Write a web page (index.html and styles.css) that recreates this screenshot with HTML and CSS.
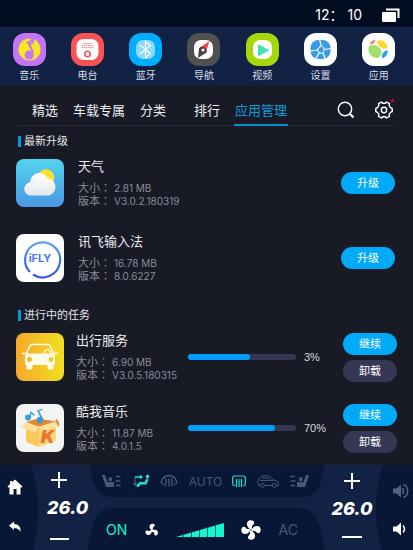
FILE: index.html
```html
<!DOCTYPE html>
<html lang="zh-CN">
	<head>
		<meta charset="utf-8"/>
		<meta name="viewport" content="width=device-width, initial-scale=1"/>
		<title>应用管理</title>
		<link rel="stylesheet" href="styles.css">
	</head>
	<body>
		<header class="status">
			<time class="clock">12： 10</time>
			<button class="icon-btn" type="button" aria-label="最近任务">
				<svg width="18" height="14" viewBox="0 0 18 14">
					<path d="M4 1.500h12.500v8.500" fill="none" stroke="#fff" stroke-width="2"/>
					<rect x="0" y="4" width="14" height="10" rx="1" fill="#fff"/>
				</svg>
			</button>
		</header>

		<nav class="launcher">
			<a href="#music">
				<svg width="33" height="33" viewBox="0 0 33 33">
					<rect width="33" height="33" rx="12" fill="#c573fb"/>
					<circle cx="16.500" cy="16.500" r="11" fill="#f8e71c"/>
					<path d="M13.500 9.500c3 .2 5-1.500 6.500-4.500-.3 2-.2 3 .3 4-1 1.500-2.600 2-4.300 2l4.200 8.500" fill="none" stroke="#c573fb" stroke-width="2"/>
					<circle cx="16.200" cy="22" r="4.600" fill="#c573fb"/>
				</svg>
				音乐
			</a>
			<a href="#radio">
				<svg width="33" height="33" viewBox="0 0 33 33">
					<rect width="33" height="33" rx="12" fill="#fb5353"/>
					<rect x="5.500" y="6" width="22" height="21" rx="7" fill="#fff"/>
					<g stroke="#fb8a8a" stroke-width="1" stroke-dasharray="1.500 .6">
						<path d="M12 10.500h9M10.500 12.500h12M10.500 14.500h12"/>
					</g>
					<circle cx="16.500" cy="21" r="2.700" fill="#fff" stroke="#fb5353" stroke-width="1.600"/>
				</svg>
				电台
			</a>
			<a href="#bluetooth">
				<svg width="33" height="33" viewBox="0 0 33 33">
					<rect width="33" height="33" rx="12" fill="#00aeff"/>
					<rect x="7" y="7" width="19" height="19" rx="7" fill="#8adaf8"/>
					<path d="M11 12l10.500 8.500-5 4V8.500l5 4L11 21" fill="none" stroke="#fff" stroke-width="1.200"/>
				</svg>
				蓝牙
			</a>
			<a href="#navigation">
				<svg width="33" height="33" viewBox="0 0 33 33">
					<rect width="33" height="33" rx="12" fill="#505050"/>
					<rect x="7" y="7" width="19" height="19" rx="7" fill="#fff"/>
					<path d="M22.500 8l-9.500 6.500 6 4z" fill="#f8444a"/>
					<path d="M11 25l1-9.500c2.500-4 9.500 0 7.500 4z" fill="#454545"/>
					<circle cx="16" cy="17" r="1.500" fill="#fff"/>
				</svg>
				导航
			</a>
			<a href="#video">
				<svg width="33" height="33" viewBox="0 0 33 33">
					<rect width="33" height="33" rx="12" fill="#a5d70a"/>
					<rect x="7" y="7" width="19" height="19" rx="7" fill="#fff"/>
					<path d="M12.500 12v10.500L22.500 17.300z" fill="#43dfb6" stroke="#43dfb6" stroke-linejoin="round"/>
				</svg>
				视频
			</a>
			<a href="#settings">
				<svg width="33" height="33" viewBox="0 0 33 33">
					<rect width="33" height="33" rx="12" fill="#fff"/>
					<rect x="6.500" y="7" width="20" height="19" rx="8" fill="#3a9ae2"/>
					<path d="M15.500 6l1.500 6.500M14 17L6 18M20.500 16.500l6.500-1M19 20l2.500 6.500M15 20l-3.500 6" fill="none" stroke="#fff" stroke-width="1.200"/>
					<path d="M17 12.500l3.500 3.500-1.500 4h-4l-1.500-3.500z" fill="#3a9ae2" stroke="#fff" stroke-width="1.300" stroke-dasharray="2 .8"/>
				</svg>
				设置
			</a>
			<a href="#apps">
				<svg width="33" height="33" viewBox="0 0 33 33">
					<rect width="33" height="33" rx="12" fill="#fff"/>
					<path d="M7 13c4-2.500 11 0 12 4 1 3.500-.5 7-3 8-5 .5-9-3.500-9.500-7.500-.2-2 0-3.500.5-4.500z" fill="#a5e06a"/>
					<path d="M15 8c4-2 10 .5 10.500 7-3 2-9 .5-10.500-7z" fill="#fbd92c"/>
					<path d="M13.500 7c-3 0-5 1.500-6 4.500 3 0 5.500-1.500 6-4.500z" fill="#f47c7c"/>
					<path d="M25.500 17c-4 1-6 4-5.500 8 3.500 0 6-4 5.500-8z" fill="#1ba5ee"/>
				</svg>
				应用
			</a>
		</nav>

		<main class="store">
			<div class="toolbar">
				<nav class="tabs">
					<a href="#selected">精选</a>
					<a href="#car">车载专属</a>
					<a href="#category">分类</a>
					<a class="apart" href="#rank">排行</a>
					<a class="active" href="#manage">应用管理</a>
				</nav>
				<button class="icon-btn" type="button" aria-label="搜索">
					<svg width="18" height="18" viewBox="0 0 18 18" fill="none" stroke="#fff">
						<circle cx="8" cy="8" r="6.700" stroke-width="1.400"/>
						<path d="M12.800 12.800l3.700 3.700" stroke-width="2.200"/>
					</svg>
				</button>
				<button class="icon-btn notify" type="button" aria-label="设置">
					<svg width="18" height="18" viewBox="0 0 18 18" fill="none" stroke="#fff" stroke-width="1.400" stroke-linejoin="round">
						<path d="M6.500 1l1 1.200h3l1-1.200 3 1.700-.4 1.800 1.200 2 1.900.8v3.400l-1.900.8-1.200 2 .4 1.800-3 1.700-1-1.200h-3l-1 1.200-3-1.700.4-1.800-1.200-2-1.900-.8V7.300l1.900-.8 1.200-2-.4-1.800z"/>
						<circle cx="9" cy="9" r="2.700"/>
					</svg>
				</button>
			</div>

			<section class="group">
				<h2>最新升级</h2>
				<article class="app">
					<svg class="logo" viewBox="0 0 48 48">
						<defs>
							<linearGradient id="sky" x2="0" y2="1">
								<stop stop-color="#52d3ee"/>
								<stop offset="1" stop-color="#4a98e4"/>
							</linearGradient>
							<linearGradient id="cloud" x2="0" y2="1">
								<stop stop-color="#fff"/>
								<stop offset="1" stop-color="#e4e8ea"/>
							</linearGradient>
						</defs>
						<rect width="48" height="48" rx="8" fill="url(#sky)"/>
						<circle cx="30" cy="18.500" r="8.300" fill="#ffe12b"/>
						<path d="M15.500 36.500a6.600 6.600 0 0 1-1.300-13.200c.3-5.300 4.300-9.300 9-9.300 4 0 7 2.200 8.300 5.600 4.500.2 8 3.800 8 8.300 0 4.600-3.600 8.600-8.300 8.600z" fill="url(#cloud)"/>
					</svg>
					<div class="info">
						<h3>天气</h3>
						<dl lang="zh-TW">
							<dt>大小：</dt><dd>2.81 MB</dd>
							<dt>版本：</dt><dd>V3.0.2.180319</dd>
						</dl>
					</div>
					<button class="btn" type="button">升级</button>
				</article>
				<article class="app">
					<svg class="logo" viewBox="0 0 48 48">
						<defs>
							<linearGradient id="ring" x2="0" y2="1">
								<stop stop-color="#58a0f6"/>
								<stop offset="1" stop-color="#3457e6"/>
							</linearGradient>
						</defs>
						<rect width="48" height="48" rx="8" fill="#fff"/>
						<path d="M14 38A17.500 17.500 0 1 1 17 40.500" fill="none" stroke="url(#ring)" stroke-width="2.200"/>
						<text class="ifly" x="24" y="28" text-anchor="middle">iFLY</text>
					</svg>
					<div class="info">
						<h3>讯飞输入法</h3>
						<dl lang="zh-TW">
							<dt>大小：</dt><dd>16.78 MB</dd>
							<dt>版本：</dt><dd>8.0.6227</dd>
						</dl>
					</div>
					<button class="btn" type="button">升级</button>
				</article>
			</section>

			<section class="group tasks">
				<h2>进行中的任务</h2>
				<article class="app">
					<svg class="logo" viewBox="0 0 48 48">
						<defs>
							<linearGradient id="taxi">
								<stop stop-color="#f5a828"/>
								<stop offset="1" stop-color="#f2df22"/>
							</linearGradient>
						</defs>
						<rect width="48" height="48" rx="8" fill="url(#taxi)"/>
						<path d="M10 21.500l4-9c.4-.8 1-1 2-1h16c1 0 1.600.2 2 1l4 9M6 20.500h5M37 20.500h5" fill="none" stroke="#fffbe8" stroke-width="1.500"/>
						<path d="M10.500 20.500h27l1.500 2v9.500h-1.500v3a1.500 1.500 0 0 1-1.500 1.500h-3a1.500 1.500 0 0 1-1.500-1.500v-3h-15v3a1.500 1.500 0 0 1-1.500 1.500h-3a1.500 1.500 0 0 1-1.500-1.500v-3H9v-9.500z" fill="#fffbe8"/>
						<circle cx="31.500" cy="19.500" r="3" fill="none" stroke="#fffbe8" stroke-width="1.200"/>
						<circle cx="13.500" cy="26.500" r="2.400" fill="#f3b524"/>
						<circle cx="35" cy="26.500" r="2.400" fill="#f2c722"/>
					</svg>
					<div class="info">
						<h3>出行服务</h3>
						<dl lang="zh-TW">
							<dt>大小：</dt><dd>6.90 MB</dd>
							<dt>版本：</dt><dd>V3.0.5.180315</dd>
						</dl>
					</div>
					<div class="bar"><div class="fill" style="width: 57%"></div></div>
					<span class="percent">3%</span>
					<div class="actions">
						<button class="btn" type="button">继续</button>
						<button class="btn muted" type="button">卸载</button>
					</div>
				</article>
				<article class="app">
					<svg class="logo" viewBox="0 0 48 48">
						<rect width="48" height="48" rx="8" fill="#f4f4f4"/>
						<path d="M10 18l12-3.500 18 3-18 5.500z" fill="#e58a2c"/>
						<path d="M40 14.500l3 3.500v5l-4-3.500z" fill="#ee8a30"/>
						<path d="M10 18l13 5v20L10 38z" fill="#fbc65a"/>
						<path d="M23 23l17-4.500v18L23 43z" fill="#fcd778"/>
						<path d="M10 18l13 5-4 5.500-14-5z" fill="#fde09a"/>
						<path d="M23 23l17-4.500 2 3.500-16 5z" fill="#fde3a0"/>
						<g fill="#359ddf">
							<circle cx="12" cy="13.500" r="3"/>
							<circle cx="24" cy="16" r="3.200"/>
							<path d="M13.500 13l1-6 4.500 4-1 .8-2.800-2L15 14zM25.500 15.500l-4.500-9 5.500-2-.4 1.600-3.100 1 4 7.500z"/>
						</g>
						<text class="kuwo" x="31.500" y="39" text-anchor="middle">K</text>
					</svg>
					<div class="info">
						<h3>酷我音乐</h3>
						<dl lang="zh-TW">
							<dt>大小：</dt><dd>11.87 MB</dd>
							<dt>版本：</dt><dd>4.0.1.5</dd>
						</dl>
					</div>
					<div class="bar"><div class="fill" style="width: 81%"></div></div>
					<span class="percent">70%</span>
					<div class="actions">
						<button class="btn" type="button">继续</button>
						<button class="btn muted" type="button">卸载</button>
					</div>
				</article>
			</section>
		</main>

		<footer class="climate">
			<!-- dark panels behind the controls -->
			<svg class="panels" viewBox="0 0 413 86" preserveAspectRatio="none" fill="#071735">
				<path d="M0 0h31q13 42 2 86H0z"/>
				<path d="M413 0h-30q-14 42-1 86h31z"/>
				<path d="M89 0C93 16 94 32 112 32h190c16 0 20-12 22-32z"/>
				<path d="M87 86C92 66 92 43 112 43h188c18 0 20 20 25 43z"/>
			</svg>

			<div class="side">
				<button class="icon-btn" type="button" aria-label="主页">
					<svg width="16" height="16" viewBox="0 0 16 16" fill="#fff">
						<path d="M8 .5l7.500 7-1 1.200L13.500 8v7.500h-4V10h-3v5.500h-4V8l-1 .7-1-1.200L3 5V2h2v1.200z"/>
					</svg>
				</button>
				<button class="icon-btn" type="button" aria-label="返回">
					<svg width="16" height="16" viewBox="0 0 16 16" fill="#fff">
						<path d="M2 6.500L7 2.500V5c4.500 0 7 3 6.500 8C12 10 10 9 7 9v2z"/>
					</svg>
				</button>
			</div>

			<div class="temp">
				<button class="icon-btn" type="button" aria-label="升温">
					<svg width="22" height="22" viewBox="0 0 22 22" stroke="#fff" stroke-width="2"><path d="M4 11h16M12 3v16"/></svg>
				</button>
				<output>26.0</output>
				<button class="icon-btn" type="button" aria-label="降温">
					<svg width="22" height="22" viewBox="0 0 22 22" stroke="#fff" stroke-width="2"><path d="M3 14h20"/></svg>
				</button>
			</div>

			<div class="controls">
				<div class="modes">
					<button class="icon-btn" type="button" aria-label="左座椅">
						<svg width="20" height="16" viewBox="0 0 20 16">
							<path d="M0 2h3l2.500 7H12v5H4z" fill="#4a5875"/>
							<path d="M6.500 4.500h3.500v3.500H6.500z" fill="#4a5875"/>
							<path d="M14 3.500h4.500M13.500 8h5M14 12.500h4.500" stroke="#4a5875" stroke-width="1.600"/>
						</svg>
					</button>
					<button class="icon-btn" type="button" aria-label="吹风方向">
						<svg width="18" height="16" viewBox="0 0 18 16" fill="none" stroke="#27e0bd">
							<path d="M3 4h7" stroke-width="1.500"/>
							<path d="M8 1.500L11 4 8 6.500z" fill="#27e0bd" stroke="none"/>
							<path d="M3 4v8M1.500 10L3 12.500 4.500 10" stroke="#3c7f8d"/>
							<circle cx="15.500" cy="3.500" r="1.800" fill="#27e0bd" stroke="none"/>
							<path d="M15.500 6l-2 4.500-5-.5L5 13.500" stroke-width="2.500"/>
						</svg>
					</button>
					<button class="icon-btn" type="button" aria-label="前除雾">
						<svg width="18" height="16" viewBox="0 0 18 16" fill="none" stroke="#4a5875" stroke-width="1.300">
							<path d="M3.500 11.500L1 9.500C2.500 4.500 5 2.500 9 2.500s6.500 2 8 7l-2.500 2"/>
							<path d="M6 5.500c-1.500 2 1 3 0 4.500s-.5 2-1 3M9 5.500c-1.500 2 1 3 0 4.500v3.500M12 5.500c-1.500 2 1 3 0 4.500s.5 2 1 3"/>
						</svg>
					</button>
					<button class="auto" type="button">AUTO</button>
					<button class="icon-btn" type="button" aria-label="后除雾">
						<svg width="14" height="16" viewBox="0 0 14 16" fill="none" stroke="#27e0bd" stroke-width="1.200">
							<path d="M3 12.500H2.200Q.7 12.500.7 11V5Q.7 3 2.500 3h9q1.800 0 1.800 2v6q0 1.500-1.500 1.500H11"/>
							<path d="M4.500 6c-1 1.500.8 2.500 0 4v4M7 6c-1 1.500.8 2.500 0 4v4M9.500 6c-1 1.500.8 2.500 0 4v4"/>
						</svg>
					</button>
					<button class="icon-btn" type="button" aria-label="循环">
						<svg width="22" height="16" viewBox="0 0 22 16" fill="none" stroke="#4a5875">
							<path d="M3.500 12.500H1.500L.8 8 4 3.500Q9 1.500 13 3.500L16.500 7q4 .5 4.700 2v3.500h-2M7.500 12.500h8M3.500 7.500h12.500M5.500 5h6l2 2.500"/>
							<circle cx="5.500" cy="12.300" r="1.900"/>
							<circle cx="17.300" cy="12.300" r="1.900"/>
						</svg>
					</button>
					<button class="icon-btn" type="button" aria-label="右座椅">
						<svg width="20" height="16" viewBox="0 0 20 16">
							<path d="M20 2h-3l-2.500 7H8v5h8z" fill="#4a5875"/>
							<path d="M10 4.500h3.500v3.500H10z" fill="#4a5875"/>
							<path d="M1.500 3.500H6M1.500 8h5M1.500 12.500H6" stroke="#4a5875" stroke-width="1.600"/>
						</svg>
					</button>
				</div>
				<div class="fan">
					<button class="on" type="button">ON</button>
					<button class="icon-btn" type="button" aria-label="减小风量">
						<svg width="14" height="14" viewBox="0 0 14 14" fill="#fff">
							<path id="blade3" d="M6.500 7C3.500 5 4 1 7.500.8c2.500 0 3 2.200 1 3.200C7.500 4.700 8 6 7.500 7z"/>
							<use href="#blade3" transform="rotate(120 7 7.500)"/>
							<use href="#blade3" transform="rotate(240 7 7.500)"/>
							<circle cx="7" cy="7.500" r="1.500"/>
						</svg>
					</button>
					<svg class="level" width="48" height="16" viewBox="0 0 48 16">
						<path d="M0 15L48 1v14z" fill="#14f5d2"/>
						<path d="M7.500 12.500V15M15.500 10v5M23.500 8v7M31.500 5.500V15M39.500 3v12" stroke="#0a5f6c"/>
					</svg>
					<button class="icon-btn" type="button" aria-label="增大风量">
						<svg width="20" height="20" viewBox="0 0 20 20" fill="#fff">
							<path id="blade4" d="M9.500 9C5 7.500 4.500.5 9.500.3c4-.1 4.500 3.200 2.500 4.500-1.200.8-1 2.500-1.200 4.200z"/>
							<use href="#blade4" transform="rotate(90 10 10)"/>
							<use href="#blade4" transform="rotate(180 10 10)"/>
							<use href="#blade4" transform="rotate(270 10 10)"/>
							<circle cx="10" cy="10" r="1.900"/>
							<circle cx="10" cy="10" r=".8" fill="#071735"/>
						</svg>
					</button>
					<button class="ac" type="button">AC</button>
				</div>
			</div>

			<div class="temp right">
				<button class="icon-btn" type="button" aria-label="升温">
					<svg width="22" height="22" viewBox="0 0 22 22" stroke="#fff" stroke-width="2"><path d="M3 11h16M11 3v16"/></svg>
				</button>
				<output>26.0</output>
				<button class="icon-btn" type="button" aria-label="降温">
					<svg width="22" height="22" viewBox="0 0 22 22" stroke="#fff" stroke-width="2"><path d="M1 11h20"/></svg>
				</button>
			</div>

			<div class="side right">
				<button class="icon-btn" type="button" aria-label="音量加">
					<svg width="16" height="16" viewBox="0 0 16 16" fill="none" stroke="#53617d" stroke-width="1.500">
						<path d="M0 5.500h3.500L8 1.500v13L3.500 10.500H0z" fill="#53617d" stroke="none"/>
						<path d="M9.500 5q2 3 0 6M10.500 1.500c5.500 2 5.500 11 0 13"/>
					</svg>
				</button>
				<button class="icon-btn" type="button" aria-label="音量减">
					<svg width="16" height="16" viewBox="0 0 16 16" fill="none" stroke="#fff" stroke-width="1.500">
						<path d="M0 5.500h3.500L8 1.500v13L3.500 10.500H0z" fill="#fff" stroke="none"/>
						<path d="M10 4.500q3 3.500 0 7"/>
					</svg>
				</button>
			</div>
		</footer>
	</body>
</html>
```

FILE: styles.css
```css
* {
	box-sizing: border-box;
}
body {
	margin: 0;
	min-height: 100vh;
	display: flex;
	flex-direction: column;
	background: #181a26;
	color: #fff;
	font-family: Inter, "Noto Sans CJK SC", sans-serif;
}
a {
	color: inherit;
	text-decoration: none;
}
svg {
	display: block;
}
button {
	padding: 0;
	border: 0;
	background: none;
	color: inherit;
	font-family: inherit;
	cursor: pointer;
}
h2, h3, dl, dd {
	margin: 0;
	font-weight: normal;
}

/* status bar */
.status {
	height: 27px;
	padding: 2px 13px 0 0;
	display: flex;
	justify-content: flex-end;
	align-items: center;
	gap: 20px;
	background: #030d21;
}
.clock {
	font-size: 14px;
	line-height: 20px;
}

/* launcher */
.launcher {
	height: 59px;
	padding: 6px 5px 0 0;
	display: flex;
	background: #122245;
}
.launcher a {
	flex: 1;
	display: flex;
	flex-direction: column;
	align-items: center;
	gap: 2px;
	font-size: 10px;
	line-height: 14px;
	color: #d8dce6;
}

/* app store */
.store {
	flex: 1;
}
.toolbar {
	height: 40px;
	margin: 0 18px;
	padding-right: 2px;
	display: flex;
	align-items: center;
	gap: 20px;
	box-shadow: inset 0 -1px #2b2d39;
}
.tabs {
	flex: 1;
	align-self: stretch;
	padding-left: 13px;
	display: flex;
	gap: 13px;
}
.tabs a {
	padding: 14px 1px 4px;
	border-bottom: 2px solid transparent;
	font-size: 13px;
	line-height: 20px;
	white-space: nowrap;
	color: #eceef2;
}
.tabs .apart {
	margin-left: 13px;
}
.tabs .active {
	border-color: #0590cd;
	color: #079cdc;
}
.toolbar .icon-btn {
	margin-top: 8px;
}
.notify {
	position: relative;
}
.notify::after {
	content: "";
	position: absolute;
	top: -2px;
	right: -1px;
	width: 3px;
	height: 3px;
	border-radius: 50%;
	background: #e60023;
}

.group {
	padding: 7px 18px 0 16px;
}
.group h2 {
	margin: 0 0 9px 2px;
	display: flex;
	align-items: center;
	gap: 3px;
	font-size: 11px;
	line-height: 16px;
	color: #e4e6ea;
}
.group h2::before {
	content: "";
	width: 3px;
	height: 11px;
	background: #0598e0;
}
.app {
	display: flex;
	align-items: center;
	gap: 14px;
}
.app + .app {
	margin-top: 25px;
}
.logo {
	flex: none;
	width: 48px;
	height: 48px;
}
.ifly {
	font: bold 11px Inter, sans-serif;
	fill: #4878ee;
}
.kuwo {
	font: italic 900 18px Inter, sans-serif;
	fill: #ee7430;
}
.info {
	flex: 1;
}
.info h3 {
	margin-bottom: 8px;
	font-size: 13px;
	line-height: 16px;
	color: #eceef2;
}
.info dl {
	display: grid;
	grid-template-columns: 36px auto;
	line-height: 13px;
	color: #8a8c97;
}
.info dt {
	font-family: Inter, "Noto Sans CJK TC", sans-serif;
	font-size: 11px;
}
.info dd {
	font-size: 10px;
	white-space: nowrap;
}
.btn {
	width: 54px;
	height: 22px;
	border-radius: 11px;
	background: #00aaf8;
	font-size: 11px;
	line-height: 22px;
}
.btn.muted {
	background: #353855;
}

.tasks {
	padding: 24px 16px 12px;
}
.tasks .app {
	gap: 0;
}
.tasks .app + .app {
	margin-top: 21px;
}
.tasks .info {
	flex: none;
	width: 124px;
	padding-left: 12px;
}
.bar {
	flex: 1;
	height: 6px;
	border-radius: 3px;
	background: #353855;
}
.fill {
	height: 100%;
	border-radius: 3px;
	background: #009dff;
}
.percent {
	width: 47px;
	padding-left: 8px;
	font: 11px/16px "Liberation Sans", sans-serif;
	color: #d6d8de;
}
.actions {
	display: flex;
	flex-direction: column;
	gap: 5px;
}

/* climate bar */
.climate {
	position: relative;
	height: 86px;
	display: grid;
	grid-template-columns: 32px 68px 1fr 68px 32px;
	background: #122245;
}
.panels {
	position: absolute;
	inset: 0;
	width: 100%;
	height: 100%;
}
.side, .temp, .controls {
	position: relative;
}
.side {
	padding: 14px 0 16px 7px;
	display: flex;
	flex-direction: column;
	justify-content: space-between;
}
.side.right {
	padding: 18px 0 14px 12px;
}
.temp {
	padding: 4px 0 0 15px;
	display: flex;
	flex-direction: column;
	align-items: flex-start;
	gap: 8px;
}
.temp.right {
	padding: 5px 0 0 10px;
	align-items: center;
}
.temp output {
	font-size: 18px;
	font-style: italic;
	font-weight: 800;
	line-height: 18px;
}
.controls {
	display: grid;
	grid-template-rows: 32px 43px;
	gap: 11px;
}
.modes, .fan {
	padding: 0 4px 0 2px;
	display: flex;
	align-items: center;
	justify-content: space-between;
}
.fan {
	padding: 0 15px 0 6px;
}
.auto {
	font-size: 12px;
	color: #4a5875;
}
.on, .ac {
	font-size: 14px;
}
.on {
	color: #14f5d2;
}
.ac {
	color: #4a5875;
}
```
